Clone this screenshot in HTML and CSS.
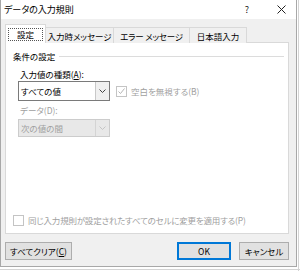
FILE: index.html
```html
<!DOCTYPE html>
<html lang="ja">
<head>
<meta charset="utf-8">
<title>データの入力規則</title>
<link rel="stylesheet" href="styles.css">
</head>
<body>
<div class="dialog">
  <div class="titlebar">
    <span class="title">データの入力規則</span>
    <span class="tbtn help">?</span>
    <span class="tbtn close"><svg width="9" height="9" viewBox="0 0 9 9"><path d="M0.5 0.5 L8.5 8.5 M8.5 0.5 L0.5 8.5" stroke="#222" stroke-width="1" fill="none"/></svg></span>
  </div>
  <div class="body">
    <div class="tabs">
      <div class="tab active"><span class="focus">設定</span></div>
      <div class="tab tab-msg">入力時メッセージ</div>
      <div class="tab tab-err">エラー メッセージ</div>
      <div class="tab tab-ime">日本語入力</div>
    </div>
    <div class="panel">
      <div class="group-title"><span>条件の設定</span><i class="rule"></i></div>
      <div class="label">入力値の種類(<u>A</u>):</div>
      <div class="row">
        <div class="select"><span class="value">すべての値</span><span class="arrow"><svg width="7" height="4" viewBox="0 0 7 4"><path d="M0.5 0.5 L3.5 3.5 L6.5 0.5" stroke="#444" fill="none"/></svg></span></div>
        <div class="check disabled"><span class="box"><svg width="9" height="9" viewBox="0 0 9 9"><path d="M1.5 4.5 L3.5 6.5 L7.5 1.5" stroke="#b5b5b5" stroke-width="1" fill="none"/></svg></span><span>空白を無視する(B)</span></div>
      </div>
      <div class="label disabled second">データ(D):</div>
      <div class="select disabled"><span class="value">次の値の間</span><span class="arrow"><svg width="7" height="4" viewBox="0 0 7 4"><path d="M0.5 0.5 L3.5 3.5 L6.5 0.5" stroke="#c4c4c4" fill="none"/></svg></span></div>
      <div class="check disabled bottom"><span class="box"></span><span>同じ入力規則が設定されたすべてのセルに変更を適用する(P)</span></div>
    </div>
    <div class="buttons">
      <button class="btn clear">すべてクリア(<u>C</u>)</button>
      <span class="grow"></span>
      <button class="btn ok">OK</button>
      <button class="btn cancel">キャンセル</button>
    </div>
  </div>
</div>
</body>
</html>
```
FILE: styles.css
```css
html, body {
  margin: 0;
  padding: 0;
}
body {
  width: 300px;
  height: 271px;
  overflow: hidden;
  background-color: #ffffff;
  background-image:
    linear-gradient(#d4d4d4, #d4d4d4),
    linear-gradient(#d4d4d4, #d4d4d4);
  background-size: 1px 100%, 100% 1px;
  background-position: 298px 0, 0 269px;
  background-repeat: no-repeat;
  font-family: "Noto Sans CJK JP", "Noto Sans", sans-serif;
  font-feature-settings: "palt";
  color: #000;
}
.dialog {
  width: 297px;
  height: 267px;
  box-sizing: border-box;
  border: 1px solid #a8a8a8;
  border-top: none;
  background: #f0f0f0;
  display: flex;
  flex-direction: column;
  font-size: 8.5px;
}
.titlebar {
  height: 19px;
  background: #fff;
  display: flex;
  align-items: center;
  padding-left: 3px;
}
.title {
  flex: 1;
  font-size: 9px;
}
.tbtn {
  display: flex;
  align-items: center;
  justify-content: center;
  height: 19px;
}
.help {
  width: 30px;
  font-size: 9px;
  color: #222;
  margin-right: 5px;
}
.close {
  width: 29px;
}
.body {
  flex: 1;
  display: flex;
  flex-direction: column;
  padding: 6px 7px 0 4px;
}
.tabs {
  display: flex;
  align-items: flex-end;
  height: 18px;
  position: relative;
  z-index: 1;
  margin-bottom: -1px;
}
.tab {
  height: 16px;
  box-sizing: border-box;
  border: 1px solid #d9d9d9;
  border-bottom: none;
  margin-left: -1px;
  display: flex;
  align-items: center;
  justify-content: center;
  white-space: nowrap;
  background: #f0f0f0;
}
.tab:first-child {
  margin-left: 0;
}
.tab-msg {
  width: 69px;
}
.tab-err {
  width: 77px;
  letter-spacing: -0.2px;
}
.tab-ime {
  width: 58px;
}
.tab.active {
  height: 19px;
  background: #fff;
  width: 41px;
}
.focus {
  border: 1px dotted #555;
  padding: 0 8px;
  height: 11px;
  display: flex;
  align-items: center;
}
.panel {
  height: 192px;
  box-sizing: border-box;
  border: 1px solid #d9d9d9;
  background: #fff;
  display: flex;
  flex-direction: column;
  padding: 7px 4px 7px 7px;
}
.group-title {
  display: flex;
  align-items: center;
  height: 12px;
}
.rule {
  flex: 1;
  height: 1px;
  background: #dcdcdc;
  margin-left: 4px;
}
.label {
  height: 12px;
  line-height: 12px;
  margin: 6px 0 1px 7px;
}
.label.second {
  margin-top: 3px;
  margin-bottom: 3px;
}
.disabled {
  color: #a0a0a0;
}
.row {
  display: flex;
  align-items: center;
}
.select {
  width: 92px;
  height: 20px;
  box-sizing: border-box;
  border: 1px solid #7a7a7a;
  margin-left: 5px;
  display: flex;
  align-items: stretch;
  background: #fff;
}
.select .value {
  flex: 1;
  display: flex;
  align-items: center;
  padding-left: 2px;
}
.arrow {
  width: 13px;
  border-left: 1px solid #c8c8c8;
  background: #f0f0f0;
  display: flex;
  align-items: center;
  justify-content: center;
}
.select.disabled {
  border-color: #cccccc;
  background: #e8e8e8;
  height: 18px;
}
.select.disabled .arrow {
  border-left-color: #d4d4d4;
  background: #e8e8e8;
}
.check {
  display: flex;
  align-items: center;
  height: 12px;
}
.row .check {
  margin-left: 6px;
}
.box {
  width: 9px;
  height: 9px;
  border: 1px solid #c4c4c4;
  background: #fff;
  margin-right: 4px;
  display: flex;
}
.check.bottom {
  margin-top: auto;
  letter-spacing: -0.2px;
}
.buttons {
  display: flex;
  margin-top: 8px;
  height: 18px;
}
.grow {
  flex: 1;
}
.btn {
  font-family: inherit;
  font-feature-settings: "palt";
  font-size: 8.5px;
  color: #000;
  height: 18px;
  box-sizing: border-box;
  border: 1px solid #adadad;
  background: #e1e1e1;
  padding: 0;
  margin: 0;
  display: flex;
  align-items: center;
  justify-content: center;
}
.clear {
  width: 67px;
}
.ok {
  width: 54px;
  border-color: #0078d7;
  box-shadow: inset 0 0 0 1px #0078d7;
  margin-right: 8px;
}
.cancel {
  width: 50px;
}
```
